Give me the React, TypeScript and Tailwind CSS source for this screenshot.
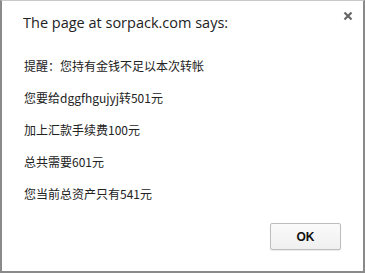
import React from 'react';

const lines = [
  '提醒：您持有金钱不足以本次转帐',
  '您要给dggfhgujyj转501元',
  '加上汇款手续费100元',
  '总共需要601元',
  '您当前总资产只有541元',
];

export default function App() {
  return (
    <div className="w-[365px] h-[273px] bg-white border-l-2 border-r-2 border-b-2 border-t border-l-[#8a8a8a] border-r-[#8a8a8a] border-b-[#8a8a8a] border-t-[#c8c8c8] relative font-['Open_Sans','Noto_Sans_CJK_SC',sans-serif] text-[#222]">
      <button className="absolute right-[7px] top-[7px] w-4 h-4 flex items-center justify-center">
        <svg width="10" height="10" viewBox="0 0 10 10">
          <path d="M1.5 1.5 L8.5 8.5 M8.5 1.5 L1.5 8.5" stroke="#666" strokeWidth="2.2" />
        </svg>
      </button>
      <div className="pl-[21px] pt-[11px] text-[14.5px] leading-[22px]">The page at sorpack.com says:</div>
      <div className="pl-[22px] pt-[22px] flex flex-col gap-[13px] text-[12px] leading-[19px] font-['Noto_Sans_CJK_SC',sans-serif]">
        {lines.map((l, i) => (
          <div key={i}>{l}</div>
        ))}
      </div>
      <div className="absolute right-[22px] bottom-[21px]">
        <button className="w-[71px] h-[27px] border border-[#bdbdbd] rounded-[2px] bg-gradient-to-b from-[#fafafa] to-[#f0f0f0] text-[12px] font-bold text-[#111] shadow-[0_1px_1px_rgba(0,0,0,0.08)] font-['Liberation_Sans',sans-serif]">
          OK
        </button>
      </div>
    </div>
  );
}
